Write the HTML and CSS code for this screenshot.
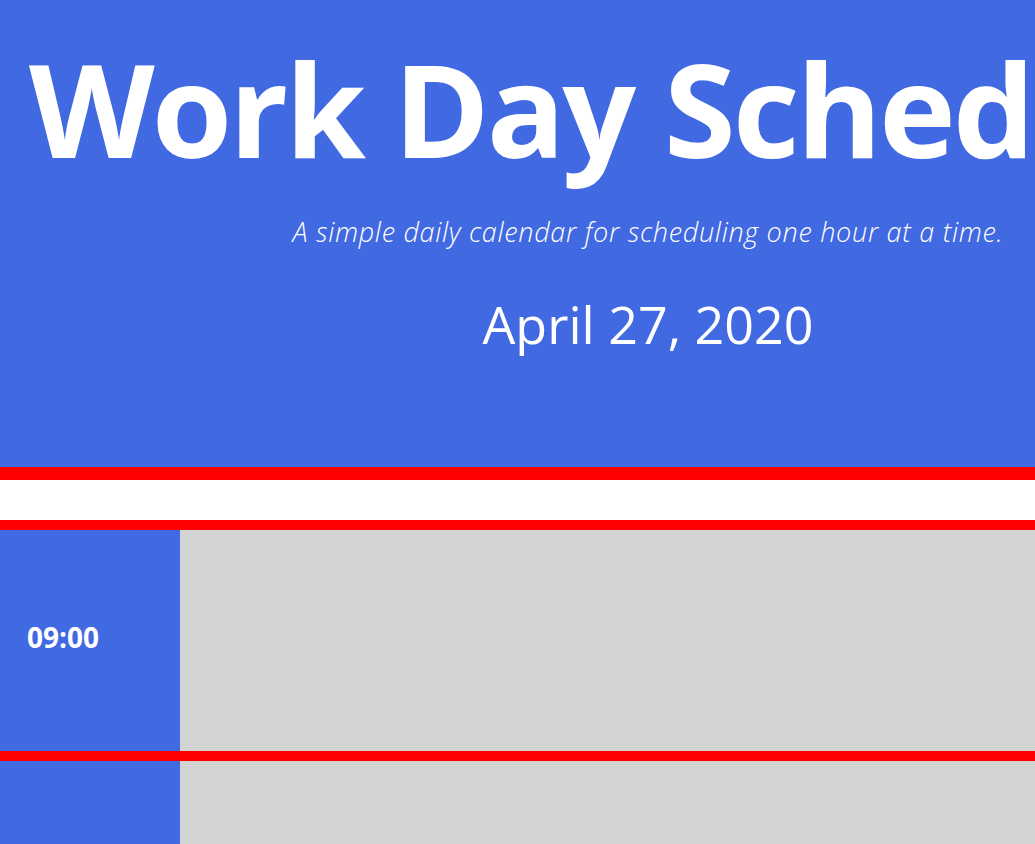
FILE: index.html
```html
<!DOCTYPE html>
<html lang="en">
<head>
<meta charset="utf-8">
<title>Work Day Scheduler</title>
<link rel="stylesheet" href="styles.css">
</head>
<body>
<div class="page">
  <header class="hero">
    <h1 class="title">Work Day Scheduler</h1>
    <p class="lead">A simple daily calendar for scheduling one hour at a time.</p>
    <p class="date">April 27, 2020</p>
  </header>
  <div class="band"></div>
  <section class="schedule">
    <div class="slot">
      <div class="hour">09:00</div>
      <div class="desc"></div>
    </div>
    <div class="slot">
      <div class="hour">10:00</div>
      <div class="desc"></div>
    </div>
  </section>
</div>
</body>
</html>
```
FILE: styles.css
```css
html, body {
  margin: 0;
  padding: 0;
  overflow: hidden;
}
body {
  font-family: "Open Sans", "Noto Sans", sans-serif;
  background: #ffffff;
}
.page {
  width: 1296px;
}
.hero {
  background: #4169e1;
  color: #ffffff;
  height: 467px;
  text-align: center;
  padding-top: 28px;
  box-sizing: border-box;
}
.title {
  margin: 0;
  padding-left: 29px;
  text-align: left;
  white-space: nowrap;
  font-size: 130px;
  font-weight: 700;
  line-height: 160px;
  letter-spacing: -3px;
}
.lead {
  margin: 27px 0 0;
  font-size: 27px;
  font-style: italic;
  font-weight: 300;
  line-height: 34px;
  letter-spacing: 0.7px;
}
.date {
  margin: 40px 0 0;
  font-size: 52px;
  font-weight: 400;
  line-height: 70px;
}
.band {
  height: 40px;
  background: #ffffff;
  border-top: 13px solid #ff0000;
  border-bottom: 10px solid #ff0000;
}
.slot {
  display: flex;
  height: 221px;
  border-bottom: 10px solid #ff0000;
}
.hour {
  width: 180px;
  flex: none;
  background: #4169e1;
  color: #ffffff;
  font-size: 28px;
  font-weight: 700;
  display: flex;
  align-items: center;
  padding-left: 27px;
  padding-bottom: 8px;
  box-sizing: border-box;
}
.desc {
  flex: 1;
  background: #d3d3d3;
}
```
